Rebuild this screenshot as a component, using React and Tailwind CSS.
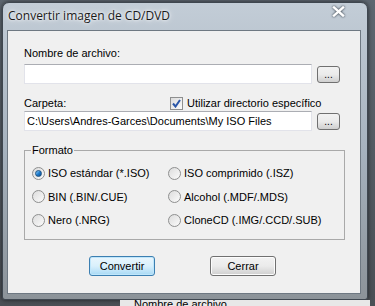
import React from "react";

function BrowseButton() {
  return (
    <button className="w-[23px] h-[17px] rounded-[3px] border border-[#707070] bg-gradient-to-b from-[#f2f2f2] via-[#ebebeb] to-[#cfcfcf] text-[10px] leading-[12px] text-black flex items-end justify-center pb-[1px]">
      ...
    </button>
  );
}

function Radio({ checked, label }) {
  return (
    <div className="flex items-center h-[14px]">
      <span className="w-[13px] h-[13px] rounded-full border border-[#8e8f8f] bg-gradient-to-br from-[#dcdcdc] to-[#fbfbfb] flex items-center justify-center">
        {checked && (
          <span className="w-[7px] h-[7px] rounded-full bg-gradient-to-br from-[#8fd3ff] via-[#1f7fd0] to-[#0b4a8f] border border-[#1c5180]" />
        )}
      </span>
      <span className="ml-[3px]">{label}</span>
    </div>
  );
}

export default function App() {
  return (
    <div
      className="w-[375px] h-[306px] overflow-hidden bg-gradient-to-b from-[#5d6670] to-[#4a4f55] relative text-black"
      style={{ fontFamily: '"Liberation Sans", Arial, sans-serif' }}
    >
      {/* window */}
      <div className="ml-[2px] mt-[2px] w-[366px] h-[298px] rounded-t-[7px] rounded-b-[3px] border border-[#3f4750] bg-gradient-to-b from-[#c3cdd7] via-[#a6b2be] to-[#8c9399] shadow-[0_0_4px_rgba(0,0,0,0.6)] flex flex-col">
        {/* title bar */}
        <div className="h-[27px] flex items-center justify-between pl-[5px] pr-[22px]">
          <span
            className="text-[12px] text-[#1b1b1b] [text-shadow:0_0_6px_#ffffff,0_0_3px_#ffffff] -mt-[2px]"
            style={{ fontFamily: '"Open Sans", "Noto Sans", sans-serif' }}
          >
            Convertir imagen de CD/DVD
          </span>
          <svg width="13" height="11" viewBox="0 0 13 11" className="-mt-[11px] drop-shadow-[0_0_1px_#1c2630]">
            <path d="M2 1.5 L11 9.5 M11 1.5 L2 9.5" stroke="#ffffff" strokeWidth="2.4" strokeLinecap="square" />
          </svg>
        </div>

        {/* client area */}
        <div className="ml-[4px] w-[354px] h-[264px] border border-[#6e7882] bg-[#f0f0f0] text-[11px] leading-[14px] flex flex-col pl-[16px]">
          <div className="mt-[15px] h-[14px]">Nombre de archivo:</div>
          <div className="mt-[4px] flex items-center">
            <div className="w-[288px] h-[20px] bg-white border border-[#e2e3ea] border-t-[#abadb3]" />
            <div className="ml-[5px]">
              <BrowseButton />
            </div>
          </div>

          <div className="mt-[12px] h-[14px] flex items-center">
            <span className="w-[146px]">Carpeta:</span>
            <span className="w-[13px] h-[13px] border border-[#8e8f8f] bg-gradient-to-br from-[#dcdcdc] to-[#fbfbfb] flex items-center justify-center">
              <svg width="9" height="9" viewBox="0 0 9 9">
                <path d="M1 4.5 L3.5 7.5 L8 1" fill="none" stroke="#2a56a8" strokeWidth="2" />
              </svg>
            </span>
            <span className="ml-[4px]">Utilizar directorio específico</span>
          </div>
          <div className="mt-[1px] flex items-center">
            <div className="w-[288px] h-[20px] bg-white border border-[#e2e3ea] border-t-[#abadb3] pl-[2px] leading-[18px] whitespace-nowrap">
              C:\Users\Andres-Garces\Documents\My ISO Files
            </div>
            <div className="ml-[5px]">
              <BrowseButton />
            </div>
          </div>

          {/* group box */}
          <div className="mt-[19px] w-[321px] h-[90px] border border-[#a9a9a9] relative pl-[7px] pt-[15px]">
            <span className="absolute -top-[8px] left-[6px] bg-[#f0f0f0] px-[1px]">Formato</span>
            <div className="grid grid-cols-[136px_1fr] gap-y-[9.5px]">
              <Radio checked label="ISO estándar (*.ISO)" />
              <Radio label="ISO comprimido (.ISZ)" />
              <Radio label="BIN (.BIN/.CUE)" />
              <Radio label="Alcohol (.MDF/.MDS)" />
              <Radio label="Nero (.NRG)" />
              <Radio label="CloneCD (.IMG/.CCD/.SUB)" />
            </div>
          </div>

          {/* buttons */}
          <div className="mt-[16px] flex pl-[65px] gap-[55px]">
            <button className="w-[66px] h-[20px] rounded-[3px] border border-[#3c7fb1] bg-gradient-to-b from-[#eaf6fd] via-[#d9f0fc] to-[#a7d9f5] shadow-[inset_0_0_0_1px_#bfe6fb] leading-[18px]">
              Convertir
            </button>
            <button className="w-[66px] h-[20px] rounded-[3px] border border-[#707070] bg-gradient-to-b from-[#f2f2f2] via-[#ebebeb] to-[#cfcfcf] shadow-[inset_0_0_0_1px_#fcfcfc] leading-[18px]">
              Cerrar
            </button>
          </div>
        </div>
      </div>
      {/* underlying window peeking below */}
      <div className="h-[6px] bg-[#e8e8e8] ml-[120px] w-[250px] overflow-hidden text-[11px] leading-[14px] pl-[14px]">
        <div className="-mt-[3px]">Nombre de archivo</div>
      </div>
    </div>
  );
}
